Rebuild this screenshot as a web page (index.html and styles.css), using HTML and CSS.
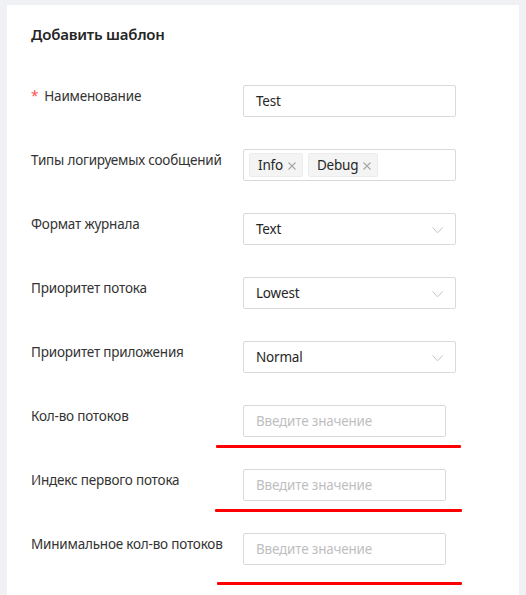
FILE: index.html
```html
<!DOCTYPE html>
<html lang="ru">
<head>
<meta charset="utf-8">
<link rel="stylesheet" href="styles.css">
</head>
<body>
<div class="card">
  <h1 class="title">Добавить шаблон</h1>
  <div class="form">
    <div class="row">
      <div class="label"><span class="req">*</span>Наименование</div>
      <div class="field"><div class="input">Test</div></div>
    </div>
    <div class="row">
      <div class="label">Типы логируемых сообщений</div>
      <div class="field">
        <div class="input tags">
          <span class="tag">Info<svg class="x" width="8" height="8" viewBox="0 0 8 8"><path d="M0.5 0.5L7.5 7.5M7.5 0.5L0.5 7.5" stroke="#a6a6a6" stroke-width="1.1"/></svg></span>
          <span class="tag">Debug<svg class="x" width="8" height="8" viewBox="0 0 8 8"><path d="M0.5 0.5L7.5 7.5M7.5 0.5L0.5 7.5" stroke="#a6a6a6" stroke-width="1.1"/></svg></span>
        </div>
      </div>
    </div>
    <div class="row">
      <div class="label">Формат журнала</div>
      <div class="field"><div class="input select">Text<svg class="chev" width="11" height="7" viewBox="0 0 11 7"><polyline points="0.5,0.5 5.5,5.8 10.5,0.5" fill="none" stroke="#c4c4c4" stroke-width="1"/></svg></div></div>
    </div>
    <div class="row">
      <div class="label">Приоритет потока</div>
      <div class="field"><div class="input select">Lowest<svg class="chev" width="11" height="7" viewBox="0 0 11 7"><polyline points="0.5,0.5 5.5,5.8 10.5,0.5" fill="none" stroke="#c4c4c4" stroke-width="1"/></svg></div></div>
    </div>
    <div class="row">
      <div class="label">Приоритет приложения</div>
      <div class="field"><div class="input select">Normal<svg class="chev" width="11" height="7" viewBox="0 0 11 7"><polyline points="0.5,0.5 5.5,5.8 10.5,0.5" fill="none" stroke="#c4c4c4" stroke-width="1"/></svg></div></div>
    </div>
    <div class="row">
      <div class="label">Кол-во потоков</div>
      <div class="field"><div class="input number placeholder">Введите значение</div></div>
      <div class="mark mark-1"></div>
    </div>
    <div class="row">
      <div class="label">Индекс первого потока</div>
      <div class="field"><div class="input number placeholder">Введите значение</div></div>
      <div class="mark mark-2"></div>
    </div>
    <div class="row">
      <div class="label">Минимальное кол-во потоков</div>
      <div class="field"><div class="input number placeholder">Введите значение</div></div>
      <div class="mark mark-3"></div>
    </div>
  </div>
</div>
</body>
</html>
```

FILE: styles.css
```css
html, body {
  margin: 0;
  padding: 0;
  background: #f0f1f4;
}
body {
  font-family: "Segoe UI", "Noto Sans", "Open Sans", sans-serif;
  font-size: 13.5px;
  letter-spacing: -0.2px;
  color: #333333;
}
.card {
  margin: 5px 0 0 7px;
  width: 512px;
  min-height: 600px;
  background: #ffffff;
  padding: 18px 0 0 24px;
  box-sizing: border-box;
}
.title {
  margin: 0 0 40px 0;
  font-size: 15px;
  line-height: 22px;
  font-weight: 600;
  color: #262626;
}
.form {
  display: flex;
  flex-direction: column;
  gap: 32px;
}
.row {
  position: relative;
  display: flex;
  align-items: flex-start;
}
.label {
  width: 212px;
  flex: none;
  line-height: 22px;
  white-space: nowrap;
}
.req {
  color: #ff4d4f;
  margin-right: 6px;
}
.input {
  box-sizing: border-box;
  width: 213px;
  height: 32px;
  border: 1px solid #d9d9d9;
  border-radius: 2px;
  padding: 0 12px;
  display: flex;
  align-items: center;
  color: #262626;
  line-height: 22px;
}
.input.number {
  width: 203px;
}
.placeholder {
  color: #bfbfbf;
}
.select {
  justify-content: space-between;
}
.chev {
  display: block;
  margin-top: 2px;
}
.tags {
  padding: 0 4px 0 5px;
  gap: 5px;
}
.tag {
  box-sizing: border-box;
  height: 24px;
  display: inline-flex;
  align-items: center;
  background: #f4f4f4;
  border: 1px solid #ececec;
  border-radius: 2px;
  padding: 0 6px 0 8px;
  color: #262626;
}
.x {
  display: block;
  margin-left: 5px;
  margin-top: 1px;
}
.mark {
  position: absolute;
  height: 3px;
  background: #ff0000;
  border-radius: 1px;
}
.mark-1 { left: 185px; top: 40px; width: 245px; }
.mark-2 { left: 184px; top: 40px; width: 247px; }
.mark-3 { left: 186px; top: 49px; width: 245px; }
```
